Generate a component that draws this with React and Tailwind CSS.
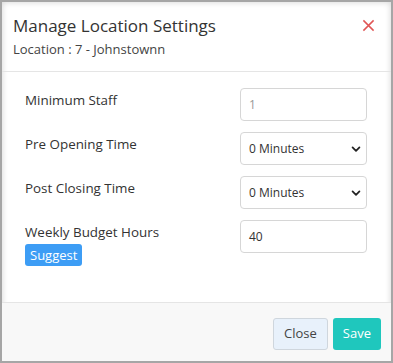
import React from "react";

function Chevron() {
  return (
    <svg width="10" height="10" viewBox="0 0 16 16" className="absolute right-[5px] top-1/2 -translate-y-1/2">
      <path d="M2.5 5.5l5.5 5.5 5.5-5.5" fill="none" stroke="#222" strokeWidth="2.8" strokeLinecap="round" strokeLinejoin="round" />
    </svg>
  );
}

function Field({ children }) {
  return (
    <div className="relative w-[127px] h-[33px] border border-[#d6d6d6] rounded-[4px] bg-white flex items-center pl-[8px] text-[12px] text-[#333]">
      {children}
    </div>
  );
}

export default function App() {
  return (
    <div className="w-[393px] h-[363px] bg-[#a6a6a6] p-[2px]" style={{ fontFamily: '"Open Sans", sans-serif' }}>
      <div className="w-full h-full bg-white flex flex-col shadow-[inset_0_0_6px_rgba(0,0,0,0.18)]">
        <div className="flex justify-between items-start pl-[11px] pr-[12px] pt-[12px] h-[70px] border-b border-[#e5e5e5]">
          <div>
            <div className="text-[17px] leading-[24px] text-[#333]">Manage Location Settings</div>
            <div className="text-[13px] leading-[18px] mt-[2px] text-[#444]">Location : 7 - Johnstownn</div>
          </div>
          <svg width="13" height="13" viewBox="0 0 14 14" className="mt-[5px] mr-[4px]">
            <path d="M1.5 1.5l11 11M12.5 1.5l-11 11" stroke="#e05555" strokeWidth="1.6" />
          </svg>
        </div>
        <div className="flex-1 pl-[23px] pr-[24px] pt-[16px] flex flex-col gap-[11px]">
          <div className="flex justify-between">
            <div className="text-[13.4px] text-[#333] pt-[2px]">Minimum Staff</div>
            <Field><span className="text-[#999]">1</span></Field>
          </div>
          <div className="flex justify-between">
            <div className="text-[13.4px] text-[#333] pt-[2px]">Pre Opening Time</div>
            <Field>0 Minutes<Chevron /></Field>
          </div>
          <div className="flex justify-between">
            <div className="text-[13.4px] text-[#333] pt-[2px]">Post Closing Time</div>
            <Field>0 Minutes<Chevron /></Field>
          </div>
          <div className="flex justify-between">
            <div className="flex flex-col items-start">
              <div className="text-[13.4px] text-[#333] pt-[2px]">Weekly Budget Hours</div>
              <div className="mt-[2px] bg-[#3d9df5] text-white text-[13px] leading-[22px] px-[5px] rounded-[3px]">Suggest</div>
            </div>
            <Field>40</Field>
          </div>
        </div>
        <div className="h-[59px] border-t border-[#e5e5e5] bg-[#f8f8f8] flex justify-end items-start pt-[15px] pr-[10px] gap-[5px]">
          <div className="h-[32px] px-[10px] flex items-center border border-[#cfd6dd] bg-[#e8f1fb] rounded-[3px] text-[13px] text-[#444]">Close</div>
          <div className="h-[32px] px-[10px] flex items-center bg-[#1fc7bd] rounded-[3px] text-[13px] text-white">Save</div>
        </div>
      </div>
    </div>
  );
}
